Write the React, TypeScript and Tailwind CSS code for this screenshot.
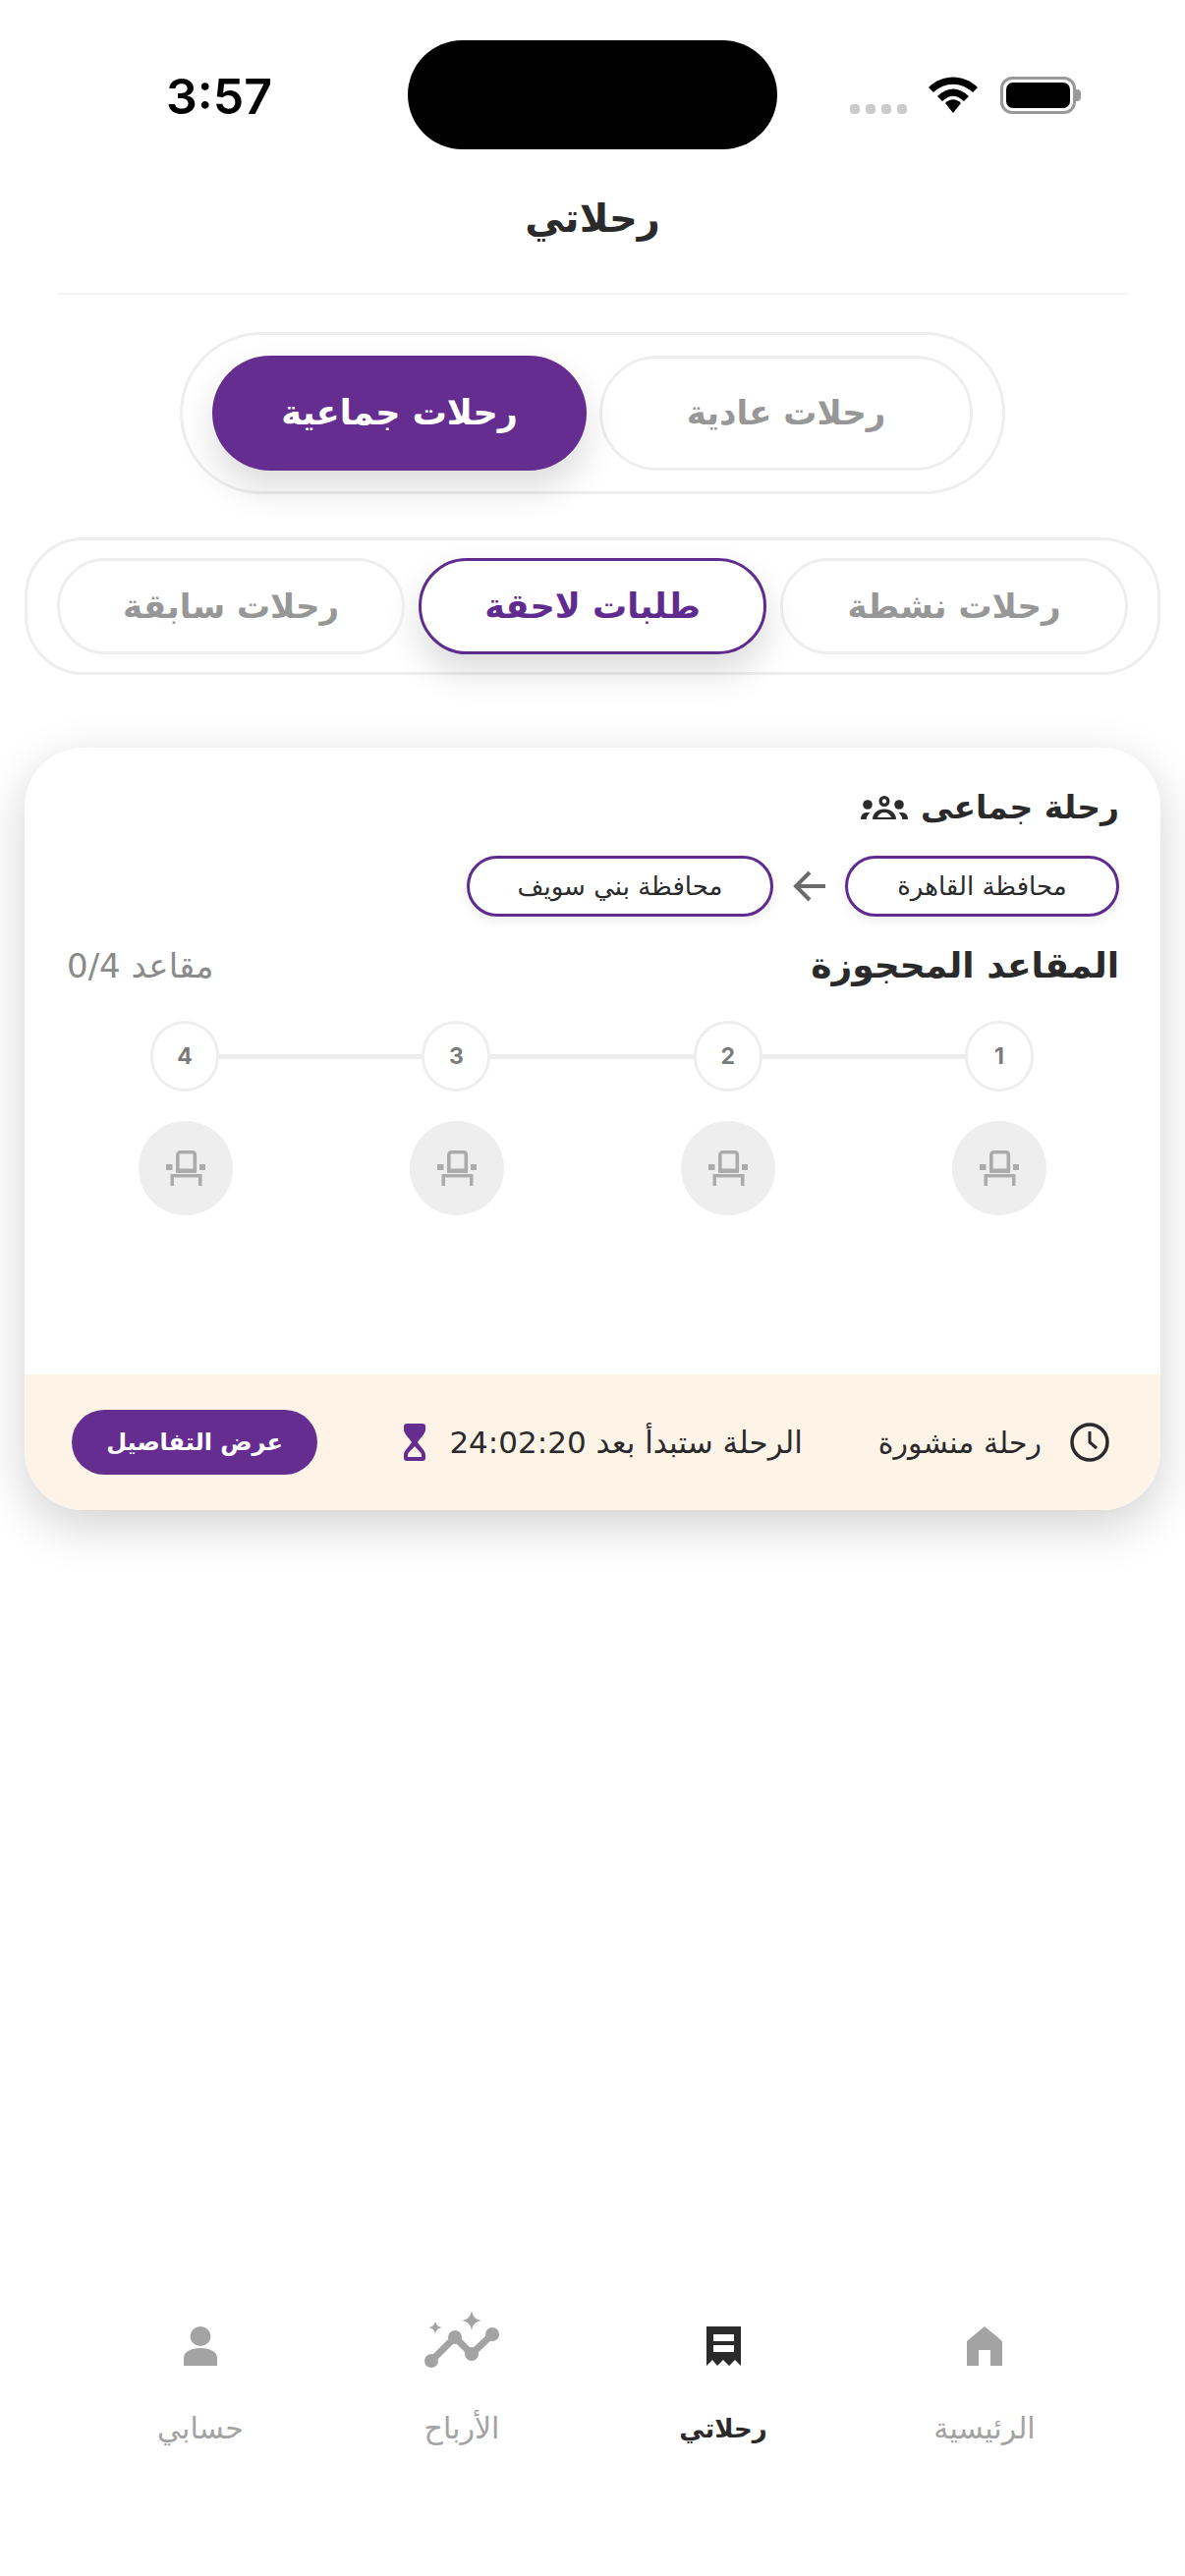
const font = "font-['DejaVu_Sans',sans-serif]";

const GroupIcon = () => (
  <svg width="48" height="24" viewBox="0 0 48 24" fill="#2a2a2a" fillRule="evenodd">
    <path d="M24 0a5.500 5.500 0 1 1 0 11 5.500 5.500 0 0 1 0-11zM24 3.200a2.300 2.300 0 1 0 0 4.600 2.300 2.300 0 0 0 0-4.600z" />
    <path d="M12 24c0-6 5-10.500 12-10.500S36 18 36 24zM17 22h14c-1-3-3.500-5-7-5s-6 2-7 5z" />
    <circle cx="7" cy="9" r="4.800" />
    <path d="M0 24c0-4 2-7 6-7h3.500c-2 2-3.500 4-4 7z" />
    <circle cx="39" cy="9" r="4.800" />
    <path d="M48 24c0-4-2-7-6-7h-3.500c2 2 3.500 4 4 7z" />
  </svg>
);

const SeatIcon = () => (
  <svg width="40" height="36" viewBox="0 0 40 36" fill="#ababab">
    <path d="M11.800 21V4.500A2.800 2.800 0 0 1 14.600 1.800h12A2.800 2.800 0 0 1 29.300 4.500v16.500" fill="none" stroke="#ababab" strokeWidth="3.600" />
    <rect x="10" y="18.500" width="21" height="4.500" />
    <rect x="0" y="14" width="6.500" height="6" />
    <rect x="34" y="14" width="6.500" height="6" />
    <path d="M4.500 24h32v12H33v-8.500H8V36H4.500z" />
  </svg>
);

const SeatColumnNumber = ({ n }: { n: number }) => (
  <div className="flex h-[72px] w-[70px] shrink-0 items-center justify-center rounded-full border-[3px] border-[#eeeeee] bg-white font-['Inter',sans-serif] text-[23px] font-bold text-[#7a7a7a]">
    {n}
  </div>
);

const Tab = ({ label, active, icon }: { label: string; active?: boolean; icon: React.ReactNode }) => (
  <div className="flex flex-col items-center">
    <div className="flex h-[50px] items-end justify-center">{icon}</div>
    <span className={`mt-[42px] leading-[44px] ${active ? "text-[26px] font-bold text-[#2a2a2a]" : "text-[30px] text-[#a3a3a3]"}`}>{label}</span>
  </div>
);

export default function App() {
  return (
    <div dir="rtl" className={`flex h-[2622px] w-[1206px] flex-col bg-white ${font}`}>
      {/* status bar */}
      <div dir="ltr" className="flex items-start pt-[41px]">
        <div className="flex w-[415px] pl-[169px] pt-[26px] font-['Inter',sans-serif] text-[50px] font-semibold leading-[62px] text-black">3:57</div>
        <div className="h-[111px] w-[376px] rounded-[56px] bg-black" />
        <div className="flex w-[415px] items-start pl-[74px] pt-[37px]">
          <div className="mt-[28px] flex gap-[6px]">
            <span className="h-[10px] w-[10px] rounded-[4px] bg-[#cccccc]" />
            <span className="h-[10px] w-[10px] rounded-[4px] bg-[#cccccc]" />
            <span className="h-[10px] w-[10px] rounded-[4px] bg-[#cccccc]" />
            <span className="h-[10px] w-[10px] rounded-[4px] bg-[#cccccc]" />
          </div>
          <svg className="ml-[22px]" width="50" height="37" viewBox="0 0 50 37" fill="#000">
            <path d="M0 11 C14-3 36-3 50 11 L45 16 C33 5 17 5 5 16z" />
            <path d="M9 20 C19 10 31 10 41 20 L36 25 C28 18 22 18 14 25z" />
            <path d="M17 27 C22 22 28 22 33 27 L25 37z" />
          </svg>
          <div className="ml-[23px] flex items-center">
            <div className="flex h-[38px] w-[77px] items-center justify-center rounded-[12px] border-[3px] border-[#999999]">
              <div className="h-[26px] w-[65px] rounded-[7px] bg-black" />
            </div>
            <div className="h-[12px] w-[5px] rounded-r-[4px] bg-[#999999]" />
          </div>
        </div>
      </div>

      {/* header */}
      <div className="flex h-[146px] items-center justify-center pb-[6px] text-[40px] font-bold text-[#2a2a2a]">رحلاتي</div>
      <div className="mx-[58px] h-[2px] bg-[#f4f4f4]" />

      {/* trip type */}
      <div className="mx-auto mt-[38px] flex h-[165px] w-[840px] items-center justify-center gap-[13px] rounded-full border-[3px] border-[#eeeeee] bg-white">
        <div className="flex h-[117px] w-[380px] items-center justify-center rounded-full border-[3px] border-[#eeeeee] text-[34px] font-bold text-[#979797]">رحلات عادية</div>
        <div className="flex h-[117px] w-[381px] items-center justify-center rounded-full bg-[#652d90] text-[35px] font-bold text-white shadow-[0_18px_36px_rgba(0,0,0,0.14)]">رحلات جماعية</div>
      </div>

      {/* trip state */}
      <div className="mx-[25px] mt-[44px] flex h-[140px] items-center justify-center gap-[14px] rounded-[60px] border-[3px] border-[#eeeeee] bg-white">
        <div className="flex h-[98px] w-[354px] items-center justify-center rounded-full border-[3px] border-[#eeeeee] text-[34px] font-bold text-[#979797]">رحلات نشطة</div>
        <div className="flex h-[98px] w-[354px] items-center justify-center rounded-full border-[3px] border-[#5f2b8e] bg-white text-[35px] font-bold text-[#5f2b8e] shadow-[0_18px_36px_rgba(0,0,0,0.14)]">طلبات لاحقة</div>
        <div className="flex h-[98px] w-[354px] items-center justify-center rounded-full border-[3px] border-[#eeeeee] text-[34px] font-bold text-[#979797]">رحلات سابقة</div>
      </div>

      {/* card */}
      <div className="mx-[25px] mt-[74px] flex h-[776px] flex-col overflow-hidden rounded-[60px] bg-white shadow-[0_16px_50px_rgba(0,0,0,0.18)]">
        <div className="flex flex-1 flex-col pl-[43px] pr-[42px] pt-[41px]">
          <div className="flex h-[40px] items-center gap-[13px] text-[33px] font-bold leading-[40px] text-[#2a2a2a]">
            <span>رحلة جماعى</span>
            <GroupIcon />
          </div>
          <div className="mt-[29px] flex items-center">
            <div className="flex h-[62px] w-[279px] items-center justify-center rounded-full border-[3px] border-[#5f2b8e] bg-white text-[26px] text-[#2a2a2a] shadow-[0_4px_12px_rgba(0,0,0,0.08)]">محافظة القاهرة</div>
            <svg className="mx-[20px]" width="33" height="32" viewBox="0 0 33 32" fill="none" stroke="#6b6b6b" strokeWidth="4">
              <path d="M33 16H3" />
              <path d="M17 2 3 16l14 14" />
            </svg>
            <div className="flex h-[62px] w-[312px] items-center justify-center rounded-full border-[3px] border-[#5f2b8e] bg-white text-[26px] text-[#2a2a2a] shadow-[0_4px_12px_rgba(0,0,0,0.08)]">محافظة بني سويف</div>
          </div>
          <div className="mt-[26px] flex h-[48px] items-center justify-between">
            <span className="text-[36px] font-bold text-[#2a2a2a]">المقاعد المحجوزة</span>
            <span className="text-[34px] text-[#8a8a8a]">مقاعد 0/4</span>
          </div>
          <div className="mt-[32px] flex items-center pl-[85px] pr-[87px]">
            <SeatColumnNumber n={1} />
            <div className="h-[5px] flex-1 bg-[#eeeeee]" />
            <SeatColumnNumber n={2} />
            <div className="h-[5px] flex-1 bg-[#eeeeee]" />
            <SeatColumnNumber n={3} />
            <div className="h-[5px] flex-1 bg-[#eeeeee]" />
            <SeatColumnNumber n={4} />
          </div>
          <div className="mt-[30px] flex justify-between pl-[73px] pr-[74px]">
            {[1, 2, 3, 4].map((s) => (
              <div key={s} className="flex h-[96px] w-[96px] items-center justify-center rounded-full bg-[#eeeeee]">
                <SeatIcon />
              </div>
            ))}
          </div>
        </div>
        <div className="flex h-[138px] items-center bg-[#fdf3e7] pl-[48px] pr-[52px] text-[#2a2a2a]">
          <svg width="40" height="40" viewBox="0 0 40 40" fill="none" stroke="#2a2a2a" strokeWidth="3.500">
            <circle cx="20" cy="20" r="18" />
            <path d="M20 9v11l7 6" strokeWidth="3" />
          </svg>
          <span className="mr-[29px] text-[30px]">رحلة منشورة</span>
          <span className="mr-[77px] text-[31px]">الرحلة ستبدأ بعد 24:02:20</span>
          <svg className="mr-[24px]" width="22" height="38" viewBox="0 0 22 38" fill="#652d90" fillRule="evenodd">
            <path d="M3 0h16a3 3 0 0 1 3 3v3c0 5-6 9-8 13 2 4 8 8 8 13v3a3 3 0 0 1-3 3H3a3 3 0 0 1-3-3v-3c0-5 6-9 8-13C6 15 0 11 0 6V3a3 3 0 0 1 3-3zM11 23c-2 3-7 6-7 9v2h14v-2c0-3-5-6-7-9z" />
          </svg>
          <button className="mr-auto flex h-[66px] w-[250px] items-center justify-center rounded-full bg-[#652d90] text-[24px] font-bold text-white">عرض التفاصيل</button>
        </div>
      </div>

      {/* bottom nav */}
      <div className="mt-auto grid h-[264px] grid-cols-4 px-[71px] pt-[0px]">
        <Tab
          label="الرئيسية"
          icon={
            <svg width="36" height="40" viewBox="0 0 36 40" fill="#a3a3a3">
              <path d="M18 0 36 15v25H24V24H12v16H0V15z" />
            </svg>
          }
        />
        <Tab
          label="رحلاتي"
          active
          icon={
            <svg width="35" height="40" viewBox="0 0 35 40" fill="#2a2a2a">
              <path d="M0 0h35v40l-6-6-6 6-6-6-6 6-5-6-6 6z M7 8v7h21V8z M7 19v7h21v-7z" fillRule="evenodd" />
            </svg>
          }
        />
        <Tab
          label="الأرباح"
          icon={
            <svg className="-mb-[4px]" width="76" height="60" viewBox="0 0 76 60" fill="#a3a3a3" stroke="none">
              <path d="M7 51 31 27 48 44 69 24" fill="none" stroke="#a3a3a3" strokeWidth="7" />
              <circle cx="7" cy="51" r="7" />
              <circle cx="31" cy="27" r="7" />
              <circle cx="48" cy="44" r="7" />
              <circle cx="69" cy="24" r="7" />
              <path d="M48 0c1 6 4 9 10 10-6 1-9 4-10 10-1-6-4-9-10-10 6-1 9-4 10-10z" />
              <path d="M11 10.500c1 4 2.500 5.500 6.500 6.500-4 1-5.500 2.500-6.500 6.500-1-4-2.500-5.500-6.500-6.500 4-1 5.500-2.500 6.500-6.500z" />
            </svg>
          }
        />
        <Tab
          label="حسابي"
          icon={
            <svg width="34" height="40" viewBox="0 0 34 40" fill="#a3a3a3">
              <ellipse cx="17" cy="10" rx="10.500" ry="10" />
              <path d="M0 40V32C0 26 7 22 17 22s17 4 17 10v8z" />
            </svg>
          }
        />
      </div>
    </div>
  );
}
